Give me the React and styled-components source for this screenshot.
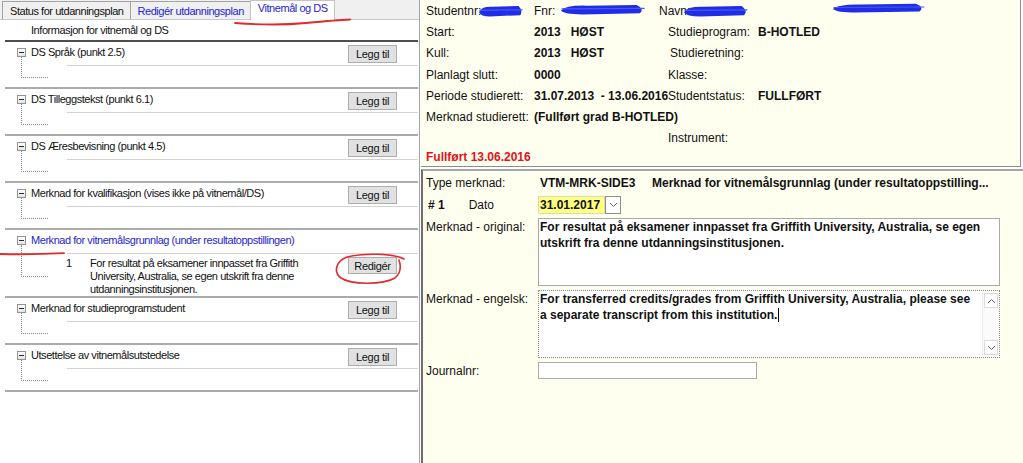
import React from 'react'
import styled, { createGlobalStyle } from 'styled-components'

const GlobalStyle = createGlobalStyle`
  html, body { margin: 0; padding: 0; background: #fff; }
  body { font-family: "Liberation Sans", Arial, sans-serif; color: #111; }
`

const sections = [
  { title: 'DS Språk (punkt 2.5)' },
  { title: 'DS Tilleggstekst (punkt 6.1)' },
  { title: 'DS Æresbevisning (punkt 4.5)' },
  { title: 'Merknad for kvalifikasjon (vises ikke på vitnemål/DS)' },
  {
    title: 'Merknad for vitnemålsgrunnlag (under resultatoppstillingen)',
    link: true,
    items: [
      {
        n: 1,
        text: 'For resultat på eksamener innpasset fra Griffith University, Australia, se egen utskrift fra denne utdanningsinstitusjonen.',
      },
    ],
  },
  { title: 'Merknad for studieprogramstudent' },
  { title: 'Utsettelse av vitnemålsutstedelse' },
]

const Chevron = ({ up }) => (
  <svg width="9" height="6" viewBox="0 0 9 6">
    <path d={up ? 'M1 5 L4.5 1.5 L8 5' : 'M1 1 L4.5 4.5 L8 1'} fill="none" stroke="#6a6a6a" strokeWidth="1" />
  </svg>
)

// blue marker strokes hiding personal data
const Scribble = ({ w, h = 12, ml = 0, raise = 0 }) => (
  <Scrawl width={w} height={h} viewBox={`0 0 ${w} ${h}`} $ml={ml} $raise={raise}>
    <path
      d={`M0 ${h * 0.6} Q ${w * 0.06} ${h * 0.1} ${w * 0.3} ${h * 0.15} L ${w * 0.9} ${h * 0.08} Q ${w} ${h * 0.45} ${w * 0.94} ${h * 0.85} L ${w * 0.25} ${h * 0.95} Q ${w * 0.04} ${h * 0.95} 0 ${h * 0.6} Z`}
      fill="#1f2de6"
    />
    <path d={`M1 ${h * 0.45} L${w - 1} ${h * 0.4}`} stroke="#4657f5" strokeWidth="1.2" strokeLinecap="round" />
  </Scrawl>
)

const App = () => {
  return (
    <>
      <GlobalStyle />
      <Page>
        <LeftPanel>
          <TabBar>
            <Tab>Status for utdanningsplan</Tab>
            <Tab $blue>Redigér utdanningsplan</Tab>
            <Tab $blue $active>Vitnemål og DS</Tab>
            <TabMark width="118" height="10" viewBox="0 0 118 10">
              <path d="M1 6 Q 40 9 72 6 T 116 2.5" fill="none" stroke="#e22a2a" strokeWidth="1.8" strokeLinecap="round" />
            </TabMark>
          </TabBar>
          <List>
            <InfoHeader>Informasjon for vitnemål og DS</InfoHeader>
            {sections.map((s) => (
              <Section key={s.title} $auto={!!s.items}>
                <Tree>
                  <TreeBox />
                  <Branch $h={s.items ? 31 : 20} />
                </Tree>
                <Main>
                  <Header>
                    <Title $link={s.link}>{s.title}</Title>
                    {!s.items && <ActionButton>Legg til</ActionButton>}
                  </Header>
                  <Rule />
                  {s.items &&
                    s.items.map((it) => (
                      <ItemRow key={it.n}>
                        <ItemNum>{it.n}</ItemNum>
                        <ItemText>{it.text}</ItemText>
                        <Circled>
                          <ActionButton $h={17}>Redigér</ActionButton>
                          <Ellipse width="74" height="34" viewBox="0 0 74 34">
                            <path
                              d="M71 7 C 60 1, 30 1, 14 5 C 3 9, 0 20, 8 26 C 18 33, 50 33, 62 26 C 68 21, 68 14, 66 8"
                              fill="none"
                              stroke="#e22a2a"
                              strokeWidth="1.6"
                              strokeLinecap="round"
                            />
                          </Ellipse>
                        </Circled>
                      </ItemRow>
                    ))}
                </Main>
                {s.items && (
                  <SideMark width="66" height="6" viewBox="0 0 66 6">
                    <path d="M0 3 Q 30 3.8 64 2.2" fill="none" stroke="#e22a2a" strokeWidth="1.8" strokeLinecap="round" />
                  </SideMark>
                )}
              </Section>
            ))}
          </List>
        </LeftPanel>

        <RightCol>
          <TopBox>
            <InfoGrid>
              <Cell>
                Studentnr:
                <Scribble w={44} ml={-2} />
              </Cell>
              <Cell>
                Fnr:
                <Scribble w={84} ml={6} h={11} raise={2} />
              </Cell>
              <Cell $shift={-9}>
                Navn:
                <Scribble w={64} ml={-6} />
              </Cell>
              <Cell>
                <Scribble w={92} ml={75} h={10} raise={4} />
              </Cell>

              <Cell>Start:</Cell>
              <Val>
                2013<Gap>HØST</Gap>
              </Val>
              <Cell>Studieprogram:</Cell>
              <Val>B-HOTLED</Val>

              <Cell>Kull:</Cell>
              <Val>
                2013<Gap>HØST</Gap>
              </Val>
              <Cell $shift={2}>Studieretning:</Cell>
              <Val />

              <Cell>Planlagt slutt:</Cell>
              <Val>0000</Val>
              <Cell>Klasse:</Cell>
              <Val />

              <Cell>Periode studierett:</Cell>
              <Val>31.07.2013&nbsp; - 13.06.2016</Val>
              <Cell>Studentstatus:</Cell>
              <Val>FULLFØRT</Val>

              <Cell>Merknad studierett:</Cell>
              <Val $span={3}>(Fullført grad B-HOTLED)</Val>

              <Cell />
              <Cell />
              <Cell>Instrument:</Cell>
              <Val />
            </InfoGrid>
            <Completed>Fullført 13.06.2016</Completed>
          </TopBox>

          <BottomBox>
            <FormLabel>Type merknad:</FormLabel>
            <TypeValue>
              <Code>VTM-MRK-SIDE3</Code>
              <span>Merknad for vitnemålsgrunnlag (under resultatoppstilling...</span>
            </TypeValue>

            <NumLabel>
              <b># 1</b>
              <span>Dato</span>
            </NumLabel>
            <DateField>
              <DateValue>31.01.2017</DateValue>
              <DropButton>
                <Chevron />
              </DropButton>
            </DateField>

            <FormLabel>Merknad - original:</FormLabel>
            <Memo>
              <MemoText>
                For resultat på eksamener innpasset fra Griffith University, Australia, se egen
                <br />
                utskrift fra denne utdanningsinstitusjonen.
              </MemoText>
            </Memo>

            <FormLabel>Merknad - engelsk:</FormLabel>
            <Memo $focus>
              <MemoText>
                For transferred credits/grades from Griffith University, Australia, please see
                <br />
                a separate transcript from this institution.<Caret />
              </MemoText>
              <ScrollBar>
                <ScrollArrow>
                  <Chevron up />
                </ScrollArrow>
                <ScrollArrow>
                  <Chevron />
                </ScrollArrow>
              </ScrollBar>
            </Memo>

            <FormLabel>Journalnr:</FormLabel>
            <TextInput />
          </BottomBox>
        </RightCol>
      </Page>
    </>
  )
}

export default App

const Page = styled.div`
  display: flex;
  width: 1023px;
  height: 463px;
  overflow: hidden;
  background: #fff;
`

/* ---------- left panel ---------- */

const LeftPanel = styled.div`
  width: 420px;
  flex: none;
  box-sizing: border-box;
  border-right: 1px solid #a3a3a3;
  background: #fff;
  font-size: 11px;
  letter-spacing: -0.45px;
`

const TabBar = styled.div`
  position: relative;
  display: flex;
  align-items: flex-end;
  height: 20px;
  box-sizing: border-box;
  padding-left: 2px;
  background: #f0f0f0;
  border-bottom: 1px solid #c9c9c9;
`

const Tab = styled.div`
  display: flex;
  align-items: center;
  box-sizing: border-box;
  height: ${(p) => (p.$active ? 20 : 18)}px;
  margin-bottom: ${(p) => (p.$active ? -1 : 0)}px;
  margin-left: -1px;
  padding: 0 6px ${(p) => (p.$active ? 5 : 0)}px 7px;
  border: 1px solid ${(p) => (p.$active ? '#c4c4c4' : '#a3a3a3')};
  border-bottom: none;
  background: ${(p) => (p.$active ? '#fff' : '#f0f0f0')};
  color: ${(p) => (p.$blue ? '#2424d6' : '#111')};
  white-space: nowrap;
  position: relative;
  z-index: ${(p) => (p.$active ? 1 : 0)};
  &:first-child {
    margin-left: 0;
  }
`

const TabMark = styled.svg`
  position: absolute;
  left: 234px;
  top: 17px;
  z-index: 3;
`

const List = styled.div`
  margin: 0 1px 0 5px;
`

const InfoHeader = styled.div`
  height: 20px;
  line-height: 20px;
  padding-left: 26px;
  border-bottom: 2px solid #4e4e4e;
`

const Section = styled.div`
  position: relative;
  display: flex;
  box-sizing: border-box;
  height: ${(p) => (p.$auto ? 'auto' : '47px')};
  padding-left: 12px;
  border-bottom: 2px solid #ababab;
`

const Tree = styled.div`
  flex: none;
  width: 14px;
  padding-top: 6px;
  display: flex;
  flex-direction: column;
`

const TreeBox = styled.div`
  width: 9px;
  height: 9px;
  box-sizing: border-box;
  border: 1px solid #939393;
  background: linear-gradient(#ffffff, #e4e4e4);
  display: flex;
  align-items: center;
  justify-content: center;
  &::after {
    content: '';
    width: 5px;
    height: 1px;
    background: #2a2a2a;
  }
`

const Branch = styled.div`
  margin-left: 4px;
  width: 26px;
  height: ${(p) => p.$h}px;
  flex: none;
  border-left: 1px dotted #8c8c8c;
  border-bottom: 1px dotted #8c8c8c;
`

const Main = styled.div`
  flex: 1;
  min-width: 0;
  display: flex;
  flex-direction: column;
`

const Header = styled.div`
  display: flex;
  justify-content: space-between;
  align-items: flex-start;
  height: 23px;
  box-sizing: border-box;
  padding-right: 21px;
`

const Title = styled.div`
  padding-top: 4px;
  line-height: 13px;
  white-space: nowrap;
  color: ${(p) => (p.$link ? '#2424d6' : '#111')};
`

const ActionButton = styled.button`
  margin-top: ${(p) => (p.$h ? 0 : 3)}px;
  width: 49px;
  height: ${(p) => p.$h || 18}px;
  padding: 0;
  background: #e1e1e1;
  border: 1px solid #adadad;
  border-radius: 0;
  font-family: inherit;
  font-size: 11px;
  letter-spacing: -0.3px;
  color: #111;
`

const Rule = styled.div`
  margin-left: 36px;
  border-top: 1px solid #d2d2d2;
`

const ItemRow = styled.div`
  display: flex;
  align-items: flex-start;
  padding: 3px 21px 0 35px;
`

const ItemNum = styled.div`
  width: 24px;
  flex: none;
  line-height: 13px;
`

const ItemText = styled.div`
  width: 228px;
  line-height: 13px;
  margin-right: auto;
`

const Circled = styled.span`
  position: relative;
  display: inline-flex;
`

const Ellipse = styled.svg`
  position: absolute;
  left: -15px;
  top: -5px;
`

const SideMark = styled.svg`
  position: absolute;
  left: -5px;
  top: 21px;
`

/* ---------- right column ---------- */

const RightCol = styled.div`
  flex: 1;
  display: flex;
  flex-direction: column;
  padding-left: 1px;
  font-size: 12px;
`

const TopBox = styled.div`
  height: 167px;
  flex: none;
  box-sizing: border-box;
  margin: 0 2px 2px 0;
  padding-left: 5px;
  background: #fffff0;
  border-right: 1px solid #8c8c8c;
  border-bottom: 1px solid #8c8c8c;
`

const InfoGrid = styled.div`
  display: grid;
  grid-template-columns: 108px 134px 90px 1fr;
  grid-auto-rows: 21.3px;
  align-items: center;
`

const Cell = styled.div`
  white-space: nowrap;
  margin-left: ${(p) => p.$shift || 0}px;
`

const Val = styled.div`
  white-space: nowrap;
  font-weight: bold;
  grid-column: span ${(p) => p.$span || 1};
`

const Gap = styled.span`
  margin-left: 10px;
`

const Scrawl = styled.svg`
  display: inline-block;
  margin-left: ${(p) => p.$ml}px;
  vertical-align: ${(p) => p.$raise - 2}px;
`

const Completed = styled.div`
  line-height: 17px;
  color: #e3121c;
  font-weight: bold;
`

const BottomBox = styled.div`
  flex: 1;
  display: grid;
  grid-template-columns: 112px auto;
  justify-content: start;
  align-content: start;
  align-items: start;
  row-gap: 4px;
  padding: 3px 0 0 3px;
  background: #fffff0;
  border-top: 2px solid #a6a6a6;
  border-left: 2px solid #6e6e6e;
`

const FormLabel = styled.div`
  line-height: 18px;
  white-space: nowrap;
`

const TypeValue = styled.div`
  display: flex;
  padding-left: 2px;
  line-height: 18px;
  font-weight: bold;
  white-space: nowrap;
`

const Code = styled.span`
  width: 112px;
`

const NumLabel = styled.div`
  display: flex;
  gap: 24px;
  padding-left: 2px;
  line-height: 18px;
`

const DateField = styled.div`
  display: flex;
  height: 18px;
`

const DateValue = styled.div`
  width: 67px;
  box-sizing: border-box;
  background: #ffff80;
  border: 1px solid #d9d9b6;
  padding-left: 1px;
  line-height: 16px;
  font-weight: bold;
`

const DropButton = styled.div`
  width: 16px;
  box-sizing: border-box;
  border: 1px solid #8e8e8e;
  background: #fff;
  display: flex;
  align-items: center;
  justify-content: center;
`

const Memo = styled.div`
  display: flex;
  width: 462px;
  height: 68px;
  box-sizing: border-box;
  background: #fff;
  border: 1px ${(p) => (p.$focus ? 'dotted #8a8a8a' : 'solid #a9a9a9')};
  font-weight: bold;
  line-height: 15.5px;
`

const MemoText = styled.div`
  flex: 1;
  padding: 1px 2px 0 1px;
  white-space: nowrap;
  overflow: hidden;
`

const Caret = styled.span`
  display: inline-block;
  width: 1px;
  height: 14px;
  margin-left: 1px;
  background: #000;
  vertical-align: -3px;
`

const ScrollBar = styled.div`
  width: 17px;
  flex: none;
  display: flex;
  flex-direction: column;
  justify-content: space-between;
  padding: 2px 1px;
  box-sizing: border-box;
  background: #fbfbfb;
  border-left: 1px solid #ececec;
`

const ScrollArrow = styled.div`
  height: 13px;
  border: 1px solid #dadada;
  background: #fff;
  display: flex;
  align-items: center;
  justify-content: center;
`

const TextInput = styled.div`
  width: 219px;
  height: 17px;
  box-sizing: border-box;
  background: #fff;
  border: 1px solid #ababab;
`
